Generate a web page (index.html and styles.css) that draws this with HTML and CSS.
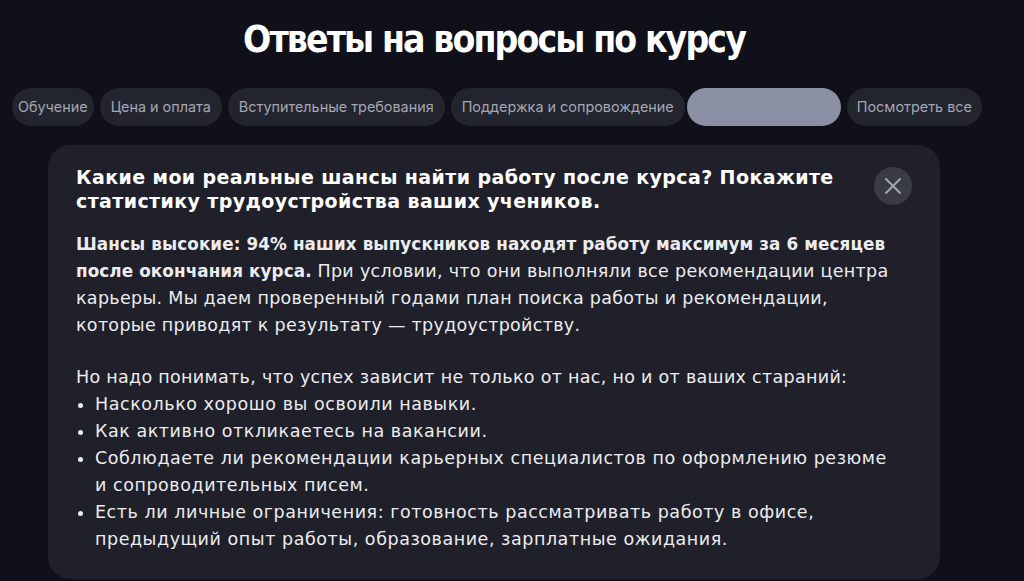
FILE: index.html
```html
<!DOCTYPE html>
<html lang="ru">
<head>
    <meta charset="UTF-8">
    <meta name="viewport" content="width=device-width, initial-scale=1.0">
    <title>Ответы на вопросы по курсу</title>
    <link rel="stylesheet" href="styles.css">
</head>
<body>

<section class="faq">
    <h1 class="faq-title">Ответы на вопросы по курсу</h1>

    <nav class="tabs">
        <a href="#" class="tab tab-first">Обучение</a>
        <a href="#" class="tab">Цена и оплата</a>
        <a href="#" class="tab">Вступительные требования</a>
        <a href="#" class="tab">Поддержка и сопровождение</a>
        <a href="#" class="tab tab-active"></a>
        <a href="#" class="tab tab-last">Посмотреть все</a>
    </nav>

    <div class="card">
        <div class="card-head">
            <h2 class="question">Какие мои реальные шансы найти работу после курса? Покажите статистику трудоустройства ваших учеников.</h2>
            <button class="close" aria-label="Закрыть">
                <svg width="18" height="18" viewBox="0 0 18 18">
                    <path d="M2 2 L16 16 M16 2 L2 16" stroke="#a3a6b2" stroke-width="2" stroke-linecap="round" fill="none"/>
                </svg>
            </button>
        </div>
        <div class="answer">
            <p><b>Шансы высокие: 94% наших выпускников находят работу максимум за 6 месяцев после окончания курса.</b> При условии, что они выполняли все рекомендации центра карьеры. Мы даем проверенный годами план поиска работы и рекомендации, которые приводят к результату — трудоустройству.</p>
            <p>Но надо понимать, что успех зависит не только от нас, но и от ваших стараний:</p>
            <ul>
                <li>Насколько хорошо вы освоили навыки.</li>
                <li>Как активно откликаетесь на вакансии.</li>
                <li>Соблюдаете ли рекомендации карьерных специалистов по оформлению резюме и сопроводительных писем.</li>
                <li>Есть ли личные ограничения: готовность рассматривать работу в офисе, предыдущий опыт работы, образование, зарплатные ожидания.</li>
            </ul>
        </div>
    </div>
</section>

</body>
</html>
```

FILE: styles.css
```css
body {
    font-family: Inter, "Noto Sans", sans-serif;
    background-color: #0f1019;
    color: #ececf0;
    margin: 0;
    padding: 0;
    overflow: hidden;
}
.faq {
    width: 988px;
    padding-top: 18px;
}
.faq-title {
    font-family: "DejaVu Sans Condensed", "DejaVu Sans", sans-serif;
    font-size: 37px;
    font-weight: bold;
    letter-spacing: -1.9px;
    color: #fff;
    text-align: center;
    margin: 0 0 26px;
    line-height: 44px;
}
.tabs {
    display: flex;
    gap: 6px;
    padding-left: 12px;
}
.tab {
    display: inline-block;
    height: 38px;
    line-height: 38px;
    padding: 0 11px;
    border-radius: 19px;
    background-color: #22242e;
    color: #a4a7b4;
    font-size: 14.4px;
    text-decoration: none;
    white-space: nowrap;
}
.tab-first {
    padding: 0 6px;
}
.tab-active {
    width: 132px;
    margin-left: -4px;
    background-color: #8b8fa3;
}
.tab-last {
    padding: 0 10px;
}
.card {
    margin: 19px 0 0 48px;
    width: 892px;
    box-sizing: border-box;
    padding: 20px 28px 26px;
    background-color: #1f2029;
    border-radius: 22px;
    font-family: "DejaVu Sans", sans-serif;
}
.card-head {
    display: flex;
    align-items: flex-start;
    justify-content: space-between;
}
.question {
    margin: 0;
    font-size: 19px;
    font-weight: bold;
    letter-spacing: 0.4px;
    line-height: 24px;
    max-width: 790px;
    color: #fff;
}
.close {
    width: 38px;
    height: 38px;
    margin: 2px 0 0 0;
    border: none;
    border-radius: 50%;
    background-color: #393b46;
    display: flex;
    align-items: center;
    justify-content: center;
    padding: 0;
}
.answer {
    margin-top: 18px;
    font-size: 17.5px;
    letter-spacing: 0.3px;
    line-height: 27px;
    max-width: 824px;
}
.answer b {
    font-size: 16.8px;
    letter-spacing: 0.1px;
}
.answer p {
    margin: 0 0 25px;
}
.answer p + ul {
    margin-top: -25px;
}
.answer ul {
    margin: 0;
    padding-left: 19px;
    letter-spacing: 0.55px;
}
```
